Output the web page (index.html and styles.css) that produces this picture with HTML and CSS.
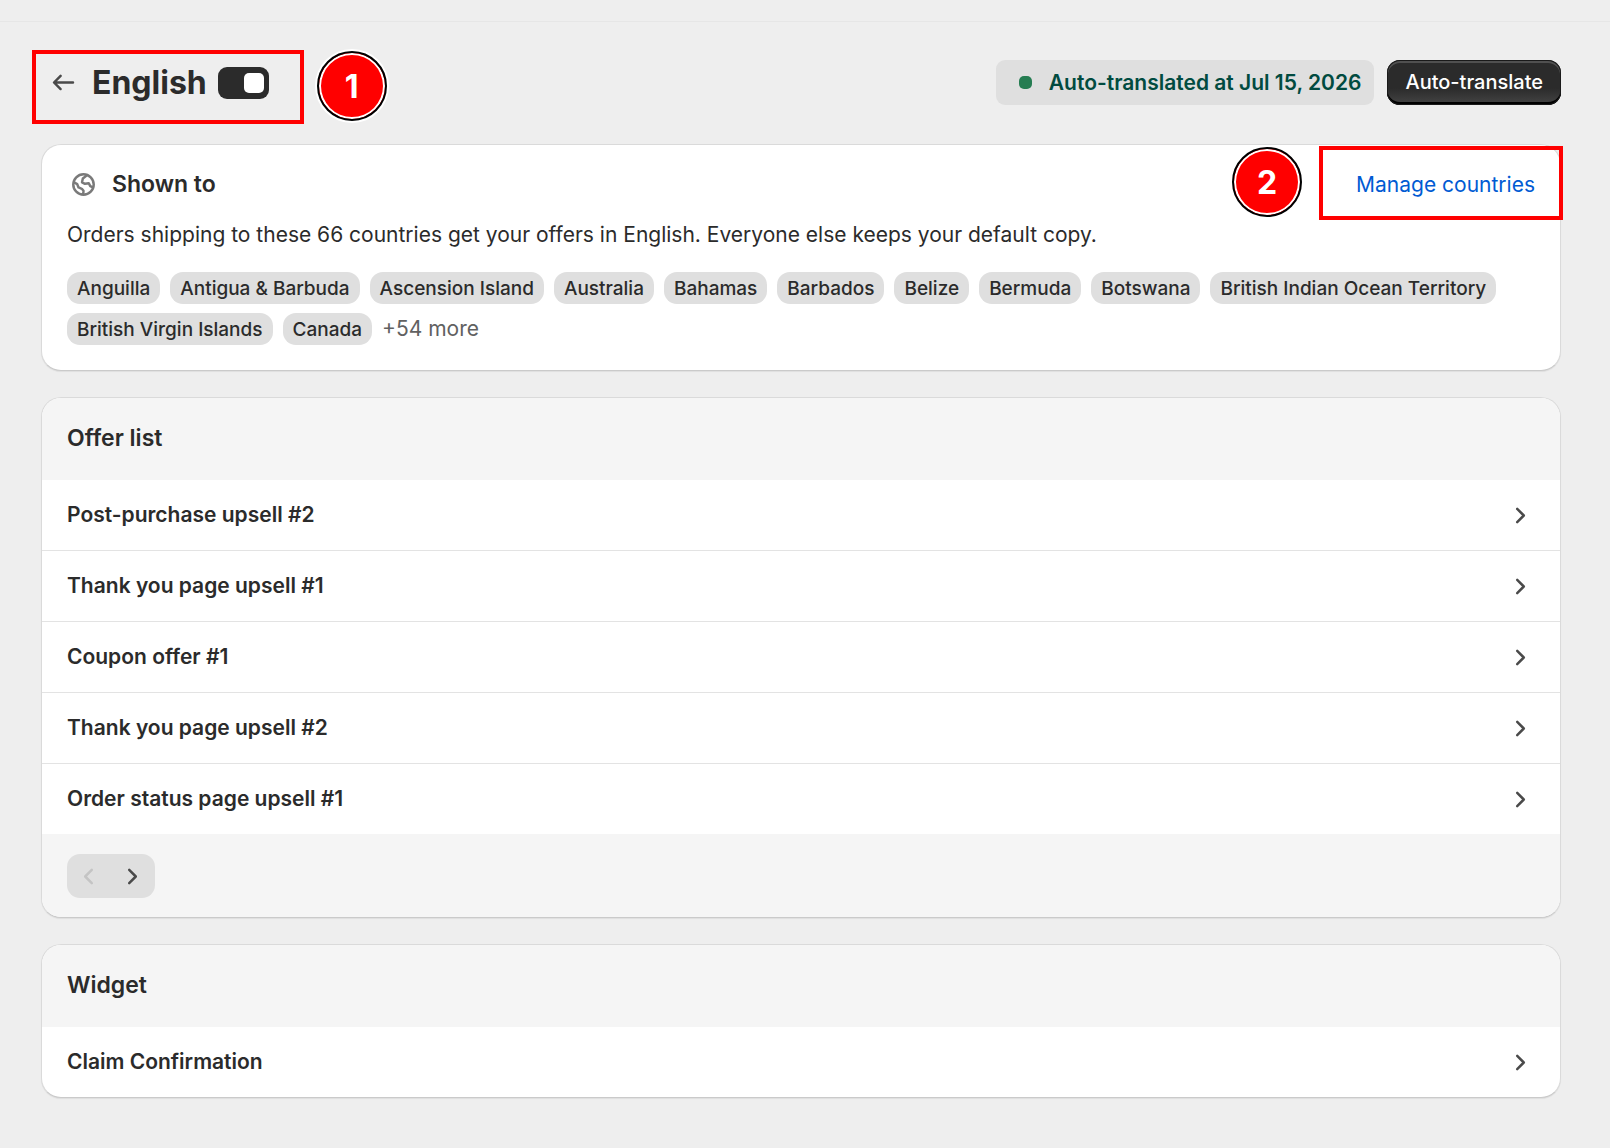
FILE: index.html
```html
<!DOCTYPE html>
<html lang="en">
<head>
<meta charset="utf-8">
<title>English translation</title>
<meta name="viewport" content="width=device-width, initial-scale=1">
<link rel="stylesheet" href="styles.css">
</head>
<body>
<div class="topbar"></div>
<main class="page">
  <header class="page-header">
    <div class="title-group">
      <a class="back" href="#" aria-label="Back">
        <svg class="icon" viewBox="0 0 20 20" fill="currentColor"><path fill-rule="evenodd" d="M16.500 10a.75.75 0 0 1-.75.75h-9.690l2.720 2.720a.75.75 0 0 1-1.060 1.060l-4-4a.75.75 0 0 1 0-1.060l4-4a.75.75 0 1 1 1.060 1.060l-2.720 2.720h9.690a.75.75 0 0 1 .75.75Z"/></svg>
      </a>
      <h1>English</h1>
      <input class="switch" type="checkbox" role="switch" aria-label="English enabled" checked>
      <span class="frame frame-title"></span>
      <span class="marker marker-title">1</span>
    </div>
    <div class="header-actions">
      <span class="status"><span class="status-dot"></span>Auto-translated at Jul 15, 2026</span>
      <button class="primary" type="button">Auto-translate</button>
    </div>
  </header>

  <section class="card countries">
    <div class="countries-head">
      <svg class="icon globe" viewBox="0 0 20 20" fill="none" stroke="currentColor" stroke-width="1.5" stroke-linejoin="round"><circle cx="10" cy="10" r="6.2"/><path d="M4 8.600l2.200 1.200.8 2 2 .8 1 1.200-.2 2.200M12.200 4.300l-2.600 2.100-.5 2.300 1.800.9 2.300-.4.9 1.800 1.900.9"/></svg>
      <h2>Shown to</h2>
      <div class="manage">
        <a href="#">Manage countries</a>
        <span class="frame frame-manage"></span>
        <span class="marker marker-manage">2</span>
      </div>
    </div>
    <p>Orders shipping to these 66 countries get your offers in English. Everyone else keeps your default copy.</p>
    <ul class="tags">
      <li class="tag">Anguilla</li>
      <li class="tag">Antigua &amp; Barbuda</li>
      <li class="tag">Ascension Island</li>
      <li class="tag">Australia</li>
      <li class="tag">Bahamas</li>
      <li class="tag">Barbados</li>
      <li class="tag">Belize</li>
      <li class="tag">Bermuda</li>
      <li class="tag">Botswana</li>
      <li class="tag">British Indian Ocean Territory</li>
      <li class="tag">British Virgin Islands</li>
      <li class="tag">Canada</li>
      <li class="more">+54 more</li>
    </ul>
  </section>

  <section class="card">
    <h2 class="card-title">Offer list</h2>
    <ul class="rows">
      <li><a class="row" href="#">Post-purchase upsell #2<svg class="icon" viewBox="0 0 20 20"><use href="#chevron"/></svg></a></li>
      <li><a class="row" href="#">Thank you page upsell #1<svg class="icon" viewBox="0 0 20 20"><use href="#chevron"/></svg></a></li>
      <li><a class="row" href="#">Coupon offer #1<svg class="icon" viewBox="0 0 20 20"><use href="#chevron"/></svg></a></li>
      <li><a class="row" href="#">Thank you page upsell #2<svg class="icon" viewBox="0 0 20 20"><use href="#chevron"/></svg></a></li>
      <li><a class="row" href="#">Order status page upsell #1<svg class="icon" viewBox="0 0 20 20"><use href="#chevron"/></svg></a></li>
    </ul>
    <div class="card-footer">
      <div class="pager">
        <button type="button" aria-label="Previous" disabled><svg class="icon flip" viewBox="0 0 20 20"><use href="#chevron"/></svg></button>
        <button type="button" aria-label="Next"><svg class="icon" viewBox="0 0 20 20"><use href="#chevron"/></svg></button>
      </div>
    </div>
  </section>

  <section class="card">
    <h2 class="card-title">Widget</h2>
    <ul class="rows">
      <li><a class="row" href="#">Claim Confirmation<svg class="icon" viewBox="0 0 20 20"><use href="#chevron"/></svg></a></li>
    </ul>
  </section>
</main>
<svg class="symbols" aria-hidden="true"><symbol id="chevron" viewBox="0 0 20 20"><path fill="none" stroke="currentColor" stroke-width="1.5" stroke-linecap="round" stroke-linejoin="round" d="M8 6l4 4-4 4"/></symbol></svg>
</body>
</html>
```
FILE: styles.css
```css
* {
  box-sizing: border-box;
}

body {
  margin: 0;
  background: #eee;
  color: #2b2b2b;
  font: 400 21px/32px Inter, "Liberation Sans", sans-serif;
}

h1, h2, p, ul {
  margin: 0;
  padding: 0;
}

ul {
  list-style: none;
}

a {
  text-decoration: none;
}

.icon {
  display: block;
  width: 33px;
  height: 33px;
  flex: none;
  color: #4a4a4a;
}

.symbols {
  display: none;
}

.topbar {
  height: 22px;
  border-bottom: 1px solid #e6e6e6;
}

.page {
  display: flex;
  flex-direction: column;
  gap: 26px;
  padding: 38px 49px 48px 41px;
}

.page-header {
  display: flex;
  align-items: center;
  justify-content: space-between;
  height: 45px;
  margin-bottom: 13px;
}

.title-group {
  position: relative;
  display: flex;
  align-items: center;
  padding-left: 6px;
}

h1 {
  margin-left: 12px;
  font-size: 32px;
  line-height: 40px;
  font-weight: 650;
}

.switch {
  appearance: none;
  display: flex;
  align-items: center;
  justify-content: flex-end;
  width: 51px;
  height: 32px;
  margin: 0 0 0 11px;
  padding: 0 5px;
  border-radius: 9px;
  background: #2b2b2b;
}

.switch::before {
  content: "";
  width: 20px;
  height: 20px;
  border-radius: 5px;
  background: #fff;
}

.switch:not(:checked) {
  justify-content: flex-start;
}

.frame {
  position: absolute;
  border: 4px solid #f00;
  pointer-events: none;
}

.frame-title {
  inset: -13px -35px -21px -9px;
}

.marker {
  position: absolute;
  display: flex;
  align-items: center;
  justify-content: center;
  width: 70px;
  height: 70px;
  padding-top: 2px;
  border: 2px solid #000;
  border-radius: 50%;
  background: #f00;
  box-shadow: inset 0 0 0 2px #fff, 0 0 0 2px #fff;
  color: #fff;
  font-size: 32px;
  font-weight: 700;
}

.marker-title {
  top: -12px;
  left: calc(100% + 48px);
}

.header-actions {
  display: flex;
  gap: 13px;
}

.status {
  display: flex;
  align-items: center;
  height: 45px;
  padding: 0 13px 0 23px;
  border-radius: 9px;
  background: #dfdfdf;
  color: #014b40;
  font-weight: 600;
}

.status-dot {
  width: 13px;
  height: 13px;
  margin-right: 17px;
  border-radius: 5px;
  background: #267d52;
}

.primary {
  height: 45px;
  padding: 0 18px 2px;
  border: 0;
  border-radius: 13px;
  background: linear-gradient(#2b2b2b 63%, #454545);
  box-shadow: inset 0 0 0 1px #1a1a1a, inset 0 -3px 0 0 #000, inset 0 2px 0 1px #505050;
  color: #fff;
  font: 550 20px/32px Inter, "Liberation Sans", sans-serif;
}

.card {
  overflow: hidden;
  border: 1px solid #dadada;
  border-bottom-color: #cacaca;
  border-radius: 20px;
  background: #fff;
  box-shadow: 0 1px 1px #0001;
}

.countries {
  padding: 23px 25px 25px;
  overflow: visible;
}

.countries-head {
  display: flex;
  align-items: center;
  height: 33px;
}

.countries-head .globe {
  color: #7a7a7a;
}

h2 {
  font-size: 23px;
  line-height: 33px;
  font-weight: 600;
}

.countries-head h2 {
  margin-left: 12px;
}

.manage {
  position: relative;
  margin-left: auto;
}

.manage a {
  color: #005bd3;
}

.frame-manage {
  inset: -23px -28px -19px -37px;
}

.marker-manage {
  top: -22px;
  right: calc(100% + 54px);
}

.countries p {
  margin-top: 18px;
}

.tags {
  display: flex;
  flex-wrap: wrap;
  gap: 9px 10px;
  margin-top: 21px;
}

.tag {
  height: 32px;
  padding: 1px 10px 0;
  border-radius: 13px;
  background: #dfdfdf;
  font-size: 19px;
  font-weight: 480;
}

.more {
  color: #616161;
}

.card-title {
  padding: 24px 25px 25px;
}

.card-title,
.card-footer {
  background: #f5f5f5;
}

.row {
  display: flex;
  align-items: center;
  justify-content: space-between;
  height: 70px;
  padding: 0 23px 0 25px;
  color: #2b2b2b;
  font-weight: 580;
}

.rows li + li {
  border-top: 1px solid #e3e3e3;
}

.card-footer {
  padding: 20px 25px 19px;
}

.pager {
  display: flex;
  width: 88px;
  border-radius: 13px;
  background: #dfdfdf;
}

.pager button {
  display: grid;
  place-items: center;
  width: 44px;
  height: 44px;
  padding: 0 2px 0 0;
  border: 0;
  background: none;
}

.pager button:disabled .icon {
  color: #c4c4c4;
}

.flip {
  transform: rotate(180deg);
}
```
